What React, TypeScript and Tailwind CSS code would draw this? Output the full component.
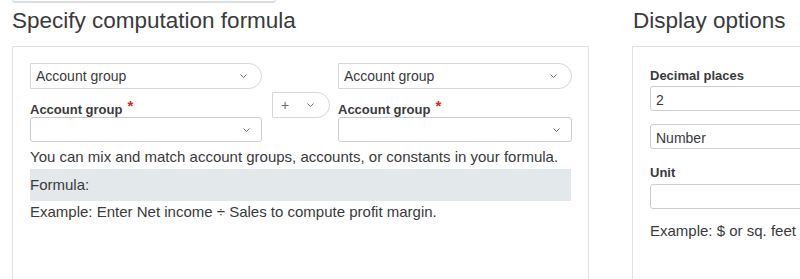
import React from "react";

const FONT = { fontFamily: '"Liberation Sans", Arial, sans-serif' };

function Chevron() {
  return (
    <svg width="9" height="6" viewBox="0 0 9 6" className="shrink-0">
      <path d="M1.5 1.5l3 3 3-3" fill="none" stroke="#6b6c72" strokeWidth="1" />
    </svg>
  );
}

function PillSelect({ value }: { value: string }) {
  return (
    <div className="flex h-[26px] w-full items-center justify-between rounded-l-[2px] rounded-r-full border border-[#d4d7dc] bg-white pl-[5px] pr-[13px] text-[14px]">
      <span className="pt-px">{value}</span>
      <Chevron />
    </div>
  );
}

function BoxSelect({ value = "" }: { value?: string }) {
  return (
    <div className="flex h-[25px] items-center justify-between rounded-[3px] border border-[#c9cdd2] bg-white pl-[5px] pr-[10px] text-[14px]">
      <span>{value}</span>
      <Chevron />
    </div>
  );
}

function Label({ text, required }: { text: string; required?: boolean }) {
  return (
    <div className="h-[16px] text-[13px] font-bold leading-[16px]">
      {text}
      {required && <span className="relative -top-[3px] ml-[5px] text-[15px] text-[#d52b1e]">*</span>}
    </div>
  );
}

function OperandColumn() {
  return (
    <div>
      <PillSelect value="Account group" />
      <div className="mt-[12px]">
        <Label text="Account group" required />
      </div>
      <BoxSelect />
    </div>
  );
}

export default function App() {
  return (
    <div className="h-[279px] w-[800px] overflow-hidden bg-white text-[#393a3d]" style={FONT}>
      <div className="ml-3 h-[3px] w-[264px] rounded-b-[5px] border-x border-b-2 border-[#dadde1]" />
      <div className="flex">
        <section className="ml-3 w-[577px] shrink-0">
          <h2 className="mb-[8px] text-[22.5px] leading-[35px]">Specify computation formula</h2>
          <div className="h-[240px] border border-[#e0e3e6] px-[17px] pt-[16px]">
            <div className="flex">
              <div className="w-[232px] shrink-0">
                <OperandColumn />
              </div>
              <div className="ml-[10px] mt-[29px] w-[58px] shrink-0">
                <div className="flex h-[26px] items-center justify-between rounded-l-[2px] rounded-r-full border border-[#d4d7dc] bg-white pl-[8px] pr-[14px] text-[14px] text-[#6b6c72]">
                  <span>+</span>
                  <Chevron />
                </div>
              </div>
              <div className="ml-[8px] w-[234px] shrink-0">
                <OperandColumn />
              </div>
            </div>
            <p className="mt-[5px] text-[15px] leading-[20px]">
              You can mix and match account groups, accounts, or constants in your formula.
            </p>
            <div className="mt-[2px] h-[32px] bg-[#e3e8ea] text-[15px] leading-[32px]">Formula:</div>
            <p className="text-[15px] leading-[22px]">Example: Enter Net income ÷ Sales to compute profit margin.</p>
          </div>
        </section>

        <section className="ml-[43px] w-[260px] shrink-0">
          <h2 className="mb-[8px] pl-px text-[22.5px] leading-[35px]">Display options</h2>
          <div className="h-[240px] border border-[#e0e3e6] pl-[17px] pt-[21px]">
            <Label text="Decimal places" />
            <div className="mt-[2px] flex h-[25px] items-center rounded-[3px] border border-[#c9cdd2] bg-white pl-[5px] pt-[3px] text-[14px]">
              2
            </div>
            <div className="mt-[13px] flex h-[25px] items-center rounded-[3px] border border-[#c9cdd2] bg-white pl-[5px] pt-[3px] text-[14px]">
              Number
            </div>
            <div className="mt-[16px]">
              <Label text="Unit" />
            </div>
            <div className="mt-[3px] h-[25px] rounded-[3px] border border-[#c9cdd2] bg-white" />
            <p className="mt-[12px] text-[15px] leading-[20px]">Example: $ or sq. feet</p>
          </div>
        </section>
      </div>
    </div>
  );
}
